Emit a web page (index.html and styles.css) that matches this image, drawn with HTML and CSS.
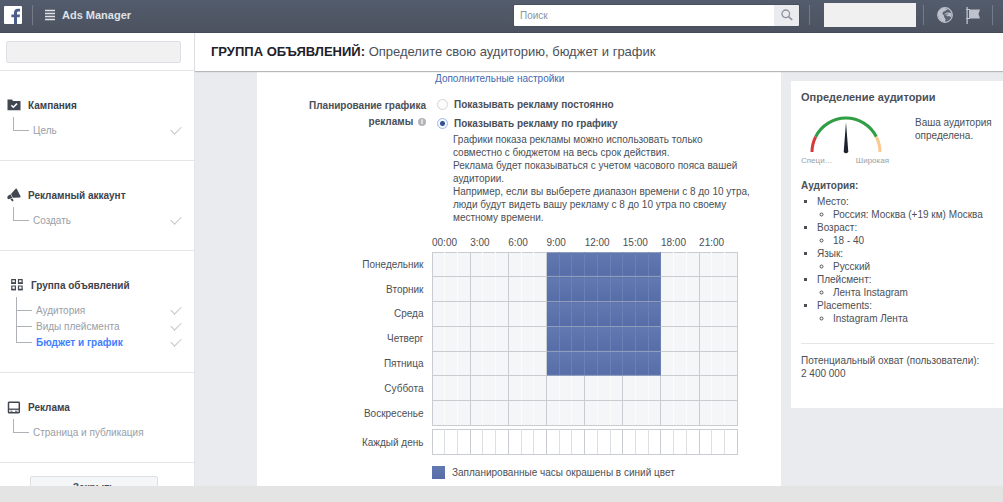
FILE: index.html
```html
<!DOCTYPE html>
<html lang="ru">
<head>
<meta charset="utf-8">
<title>Ads Manager</title>
<link rel="stylesheet" href="styles.css">
</head>
<body>
<header class="topbar">
  <a class="logo" href="#" aria-label="Facebook">
    <svg width="18" height="18" viewBox="0 0 18 18"><rect width="18" height="18" rx="1" fill="#fff"/><path d="M10 18v-6.800H7.400V8.500H10V6.600C10 4 11.500 2.700 13.900 2.700H16V5.400H14.500C13.300 5.400 13 6 13 6.900V8.500H16L15.600 11.200H13V18Z" fill="#4b5f8a"/></svg>
  </a>
  <span class="divider"></span>
  <button class="menu" type="button">
    <svg width="10" height="12" viewBox="0 0 10 12"><path d="M0 1.500h10M0 4.500h10M0 7.500h10M0 10.500h10" stroke="#dfe2e7" stroke-width="1.300"/></svg>
    <span>Ads Manager</span>
  </button>
  <form class="search">
    <input class="search-input" type="text" placeholder="Поиск" aria-label="Поиск">
    <button class="search-button" type="button" aria-label="Найти">
      <svg width="12" height="12" viewBox="0 0 12 12" fill="none" stroke="#8d939f"><circle cx="4.800" cy="4.800" r="3.800" stroke-width="1.300"/><path d="M7.600 7.600 11.200 11" stroke-width="1.700"/></svg>
    </button>
  </form>
  <span class="divider"></span>
  <span class="account"></span>
  <span class="divider"></span>
  <button class="tool" type="button" aria-label="Уведомления">
    <svg width="16" height="16" viewBox="0 0 16 16"><circle cx="8" cy="8" r="7.300" fill="#5a6373" stroke="#bdc2cc" stroke-width="1.200"/><path d="M1 7C1 3.500 4 .9 7.500 1L11 2 9.500 3 8 4 6 5 5.400 7 7 8.600 7.200 10.300 8.600 12 8 14.900C4.500 15.100 1 11.500 1 7Z" fill="#bdc2cc"/><path d="M7.800 6.500C9.500 5.200 12.500 5.200 14.700 7L14.300 10.500 12.300 9 10.500 9.600 9.300 8.200 7.800 8Z" fill="#bdc2cc"/><path d="M8 7.200h3.200" stroke="#5a6373" stroke-width=".8"/></svg>
  </button>
  <button class="tool" type="button" aria-label="Страницы">
    <svg width="14" height="17" viewBox="0 0 14 17" fill="#bdc2cc"><path d="M.5 0h1.300v17H.5z"/><path d="M3 2.500H14L12.500 7 14 11.500H3Z"/><path d="M0 2h4v1H0zM0 11h4v1H0z"/></svg>
  </button>
  <span class="divider"></span>
</header>
<div class="workspace">
  <nav class="sidebar" aria-label="Шаги">
    <div class="sidebar-head"><div class="campaign-name"></div></div>
    <section class="step">
      <h2 class="step-title">
        <svg class="step-icon" width="14" height="12" viewBox="0 0 14 12"><path d="M.5 1.500V11.300H13.500V2H6L5 .5H.5Z" fill="#414751"/><path d="M4.300 6.300 6.300 8.200 10 4.600" fill="none" stroke="#fff" stroke-width="1.500"/></svg>
        Кампания</h2>
      <ul class="step-list"><li class="step-item"><a href="#">Цель</a></li></ul>
    </section>
    <section class="step">
      <h2 class="step-title">
        <svg class="step-icon" width="14" height="14" viewBox="0 0 14 14" fill="#414751"><path d="M8.600.8 9.600.6 13.600 8.600 13 9.600 5.800 9.800 4 6Z"/><path d="M3.500 6.300 5.200 9.900 1.500 11.200C.2 11 0 9 .8 8Z"/><path d="M3.300 10.900 5.600 10.400 6.600 12.800 5.200 13.600Z"/></svg>
        Рекламный аккаунт</h2>
      <ul class="step-list"><li class="step-item"><a href="#">Создать</a></li></ul>
    </section>
    <section class="step step-nested">
      <h2 class="step-title">
        <svg class="step-icon" width="14" height="12" viewBox="0 0 14 12" fill="#fff" stroke="#414751"><path d="M1.800.7h3.600v3.700H1.800zM8.500.7h3.600v3.700H8.500zM1.800 7h3.600v3.700H1.800zM8.500 7h3.600v3.700H8.500z" stroke-width="1.200"/><path d="M1.400 4.200H6M8 4.200h4.600M1.400 10.500H6M8 10.500h4.600" stroke-width="1.700"/></svg>
        Группа объявлений</h2>
      <ul class="step-list">
        <li class="step-item"><a href="#">Аудитория</a></li>
        <li class="step-item"><a href="#">Виды плейсмента</a></li>
        <li class="step-item current"><a href="#" aria-current="step">Бюджет и график</a></li>
      </ul>
    </section>
    <section class="step">
      <h2 class="step-title">
        <svg class="step-icon" width="14" height="13" viewBox="0 0 14 13" fill="none" stroke="#414751"><rect x="1.500" y="1.200" width="10.800" height="10.600" rx=".7" stroke-width="1.500"/><path d="M1.500 8.200h10.800" stroke-width="1.300"/><path d="M3.500 10.200h2M8 10.200h2.500" stroke-width="1"/></svg>
        Реклама</h2>
      <ul class="step-list"><li class="step-item todo"><a href="#">Страница и публикация</a></li></ul>
    </section>
    <div class="sidebar-foot"><button class="close" type="button">Закрыть</button></div>
  </nav>
  <main class="content">
    <h1 class="page-title"><strong>ГРУППА ОБЪЯВЛЕНИЙ:</strong> Определите свою аудиторию, бюджет и график</h1>
    <div class="columns">
      <div class="panel">
        <a class="more" href="#">Дополнительные настройки</a>
        <div class="field" role="radiogroup" aria-labelledby="plan">
          <div class="field-label" id="plan">Планирование графика рекламы <span class="info">i</span></div>
          <div class="options">
            <label class="option"><input type="radio" name="plan">Показывать рекламу постоянно</label>
            <label class="option"><input type="radio" name="plan" checked>Показывать рекламу по графику</label>
            <p class="help">Графики показа рекламы можно использовать только совместно с бюджетом на весь срок действия.<br>Реклама будет показываться с учетом часового пояса вашей аудитории.<br>Например, если вы выберете диапазон времени с 8 до 10 утра, люди будут видеть вашу рекламу с 8 до 10 утра по своему местному времени.</p>
          </div>
        </div>
        <table class="schedule week" aria-label="График показа">
          <colgroup><col class="day-col"><col span="24"></colgroup>
          <thead><tr><td></td><th colspan="3">00:00</th><th colspan="3">3:00</th><th colspan="3">6:00</th><th colspan="3">9:00</th><th colspan="3">12:00</th><th colspan="3">15:00</th><th colspan="3">18:00</th><th colspan="3">21:00</th></tr></thead>
          <tbody id="week"></tbody>
        </table>
        <table class="schedule daily" aria-label="Каждый день">
          <colgroup><col class="day-col"><col span="24"></colgroup>
          <tbody id="daily"></tbody>
        </table>
        <div class="legend"><span class="swatch"></span>Запланированные часы окрашены в синий цвет</div>
      </div>
      <aside class="audience">
        <h2 class="audience-title">Определение аудитории</h2>
        <div class="meter">
          <div class="gauge">
            <svg width="88" height="38" viewBox="0 0 88 38" fill="none" stroke-width="3"><path d="M11 36A34 34 0 0 1 14.700 20.700" stroke="#d9383a"/><path d="M14.700 20.700A34 34 0 0 1 75.300 20.700" stroke="#2f9e44"/><path d="M75.300 20.700A34 34 0 0 1 79 36" stroke="#fbc98e"/><path d="M45 6 47.300 36Q45 38.500 42.700 36Z" fill="#1d2430"/></svg>
            <div class="gauge-labels"><span>Специ…</span><span>Широкая</span></div>
          </div>
          <p class="verdict">Ваша аудитория определена.</p>
        </div>
        <h3 class="audience-subtitle">Аудитория:</h3>
        <ul class="facts">
          <li>Место:<ul><li>Россия: Москва (+19 км) Москва</li></ul></li>
          <li>Возраст:<ul><li>18 - 40</li></ul></li>
          <li>Язык:<ul><li>Русский</li></ul></li>
          <li>Плейсмент:<ul><li>Лента Instagram</li></ul></li>
          <li>Placements:<ul><li>Instagram Лента</li></ul></li>
        </ul>
        <p class="reach">Потенциальный охват (пользователи):<br>2 400 000</p>
      </aside>
    </div>
  </main>
</div>
<footer class="statusbar"></footer>
<script src="script.js"></script>
</body>
</html>
```
FILE: styles.css
```css
* { box-sizing: border-box; }
body {
  margin: 0;
  height: 100vh;
  display: flex;
  flex-direction: column;
  overflow: hidden;
  font: 10px/13px "Liberation Sans", Arial, sans-serif;
  color: #4b4f56;
  background: #e9ebee;
}
h1, h2, h3, p, ul { margin: 0; padding: 0; }
ul { list-style: none; }
a { color: inherit; text-decoration: none; }
button { font: inherit; border: 0; padding: 0; background: none; color: inherit; }
svg { display: block; flex: none; }

.topbar {
  flex: none;
  height: 33px;
  display: flex;
  align-items: center;
  padding: 0 10px 2px 4px;
  background: linear-gradient(#535c6d, #4c525f);
  border-bottom: 1px solid #454b58;
}
.divider { width: 1px; height: 20px; background: #737b89; }
.logo { margin-right: 10px; }
.menu { display: flex; align-items: center; gap: 7px; margin-left: 12px; font-size: 11px; font-weight: bold; color: #dfe2e7; }
.search { display: flex; width: 287px; height: 23px; margin: 0 9px 0 auto; border: 1px solid #495060; border-radius: 2px; overflow: hidden; }
.search-input { flex: 1; min-width: 0; border: 0; padding: 0 6px; font: inherit; background: #fff; }
.search-input::placeholder { color: #8d939f; }
.search-button { width: 25px; display: flex; align-items: center; justify-content: center; background: #e9ebee; }
.account { width: 92px; height: 24px; margin: 0 7px 0 14px; background: #f0f0f0; }
.tool { margin-left: 13px; }
.tool + .divider { margin-left: 12px; }

.workspace { flex: 1; min-height: 0; display: flex; }
.sidebar { width: 195px; flex: none; background: #fff; border-right: 1px solid #e3e5e8; overflow: hidden; }
.sidebar-head { height: 38px; padding: 8px 13px 8px 6px; border-bottom: 1px solid #e3e5e8; }
.campaign-name { height: 22px; background: #f1f1f2; border: 1px solid #dcdfe4; border-radius: 2px; }
.step { padding: 25px 12px 22px 7px; border-bottom: 1px solid #e3e5e8; }
.step-nested { padding-left: 10px; }
.step-title { display: flex; align-items: center; gap: 7px; height: 18px; font-size: 10px; color: #3d424b; }
.step-list { position: relative; margin: 8px 0 0 6px; }
.step-item { display: flex; align-items: center; justify-content: space-between; height: 16px; position: relative; padding-left: 20px; color: #9a9ea6; }
.step-nested .step-list { margin-left: 6px; }
.step-item::before { content: ""; position: absolute; left: 0; bottom: 7px; width: 15px; height: 13px; border: solid #aeb1b6; border-width: 0 0 1px 1px; }
.step-item + .step-item::before { height: 16px; }
.step-item::after { content: ""; width: 9px; height: 5px; margin: 0 1px 3px 0; border: solid #c3c6cb; border-width: 0 0 1px 1px; transform: rotate(-45deg); }
.step-item.todo::after { content: none; }
.step-item.current { color: #4080ff; font-weight: bold; }
.sidebar-foot { padding: 13px 36px 0 30px; }
.close { width: 100%; height: 23px; border: 1px solid #dcdfe4; border-radius: 2px; background: #f5f6f7; font-weight: bold; }

.content { flex: 1; min-width: 0; display: flex; flex-direction: column; }
.page-title { position: relative; flex: none; height: 38px; padding: 0 16px; font-size: 13px; line-height: 38px; font-weight: normal; white-space: nowrap; background: #fff; box-shadow: 0 1px 1px #b5b7ba; }
.page-title strong { color: #1d2129; }
.columns { flex: 1; min-height: 0; display: flex; align-items: flex-start; gap: 10px; padding-left: 62px; }
.panel { flex: 1; min-width: 0; padding: 1px 43px 10px 0; background: #fff; }
.more { display: block; margin-left: 178px; color: #4267b2; }
.field { display: grid; grid-template-columns: 169px 1fr; column-gap: 11px; margin-top: 10px; }
.field-label { padding: 3px 0 0 50px; font-weight: bold; line-height: 16px; text-align: right; }
.info { display: inline-block; width: 8px; height: 8px; margin-left: 2px; border-radius: 50%; background: #b0b5be; color: #fff; font-size: 7px; line-height: 8px; text-align: center; vertical-align: 1px; }
.option { display: flex; align-items: center; gap: 6px; height: 19px; font-weight: bold; }
.option input { appearance: none; flex: none; width: 11px; height: 11px; margin: 0; border: 1px solid #d3d5d9; border-radius: 50%; background: #fbfbfb; }
.option input:checked { border-color: #9fb8e8; background: radial-gradient(circle, #33528f 2px, #f3f7ff 3px); }
.help { margin: 0 -16px 0 16px; }

.schedule { width: 100%; table-layout: fixed; border-collapse: collapse; }
.schedule th, .schedule td { padding: 0; font-weight: normal; }
.day-col { width: 175px; }
.week { height: 190px; margin-top: 12px; }
.week thead tr { height: 16px; }
.week thead th { text-align: left; vertical-align: top; }
.schedule .day { padding-right: 8px; text-align: right; }
.hour { height: 24px; border: 1px solid #c9ccd1; }
.week .hour { border-left-color: #fcfcfd; border-right-color: #fcfcfd; background: #f5f6f8; }
.daily .hour { border-left-color: #dddfe2; border-right-color: #dddfe2; }
.schedule .hour.mark { border-left-color: #c9ccd1; }
.schedule .hour:last-child, .schedule .hour.before-mark { border-right-color: #c9ccd1; }
.week .hour.on { background: linear-gradient(#6279b0, #566da8); border-left-color: #6b80b4; border-right-color: #6b80b4; border-top-color: #919dbd; border-bottom-color: #919dbd; }
.daily { margin-top: 3px; }
.daily .hour { height: 25px; }
.legend { display: flex; align-items: center; gap: 7px; margin: 11px 0 0 175px; }
.swatch { width: 13px; height: 13px; background: linear-gradient(#6279b0, #566da8); }

.audience { width: 212px; flex: none; margin-top: 10px; padding: 9px 9px 28px 10px; background: #fff; }
.audience-title { font-size: 11px; line-height: 14px; color: #4b4f56; }
.meter { display: flex; gap: 26px; margin-top: 12px; }
.gauge { width: 88px; flex: none; }
.gauge-labels { display: flex; justify-content: space-between; font-size: 8px; line-height: 14px; color: #9a9ea6; }
.verdict { flex: 1; }
.audience-subtitle { margin-top: 11px; font-size: 10px; line-height: 13px; }
.facts { margin-top: 3px; padding-left: 16px; list-style: square; }
.facts ul { padding-left: 16px; list-style: circle; }
.reach { margin-top: 18px; padding-top: 10px; border-top: 1px solid #e3e5e8; }

.statusbar { flex: none; height: 16px; background: #e4e4e4; }
```
FILE: script.js
```js
const HOURS = 24;
const MARK_EVERY = 3;

function addRow(body, name, from, to) {
  const row = body.insertRow();
  const day = document.createElement("th");
  day.className = "day";
  day.scope = "row";
  day.textContent = name;
  row.append(day);
  for (let hour = 0; hour < HOURS; hour++) {
    const cell = row.insertCell();
    cell.className = "hour";
    cell.classList.toggle("mark", hour % MARK_EVERY === 0);
    cell.classList.toggle("before-mark", hour % MARK_EVERY === MARK_EVERY - 1 && !(hour >= from && hour < to));
    cell.classList.toggle("on", hour >= from && hour < to);
  }
}

const week = document.getElementById("week");
for (const name of ["Понедельник", "Вторник", "Среда", "Четверг", "Пятница"]) {
  addRow(week, name, 9, 18);
}
for (const name of ["Суббота", "Воскресенье"]) {
  addRow(week, name, 0, 0);
}
addRow(document.getElementById("daily"), "Каждый день", 0, 0);
```
